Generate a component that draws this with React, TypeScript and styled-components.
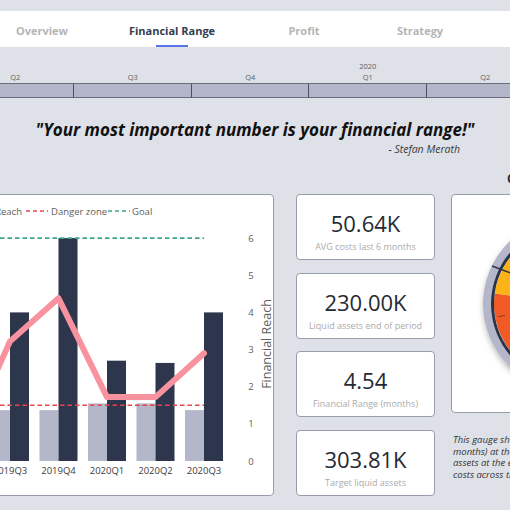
import React from "react";
import styled, { createGlobalStyle } from "styled-components";

const GlobalStyle = createGlobalStyle`
  html, body {
    margin: 0;
    padding: 0;
    background: #dfe1e8;
    overflow: hidden;
  }
  body {
    font-family: "Open Sans", "Liberation Sans", sans-serif;
  }
`;

const tabs = [
  { label: "Overview", w: 84 },
  { label: "Financial Range", w: 176, active: true },
  { label: "Profit", w: 88 },
  { label: "Strategy", w: 144 },
];

const quarters = [
  { q: "Q2" },
  { q: "Q3" },
  { q: "Q4" },
  { q: "Q1", year: "2020" },
  { q: "Q2" },
];

const kpis = [
  { value: "50.64K", label: "AVG costs last 6 months" },
  { value: "230.00K", label: "Liquid assets end of period" },
  { value: "4.54", label: "Financial Range (months)" },
  { value: "303.81K", label: "Target liquid assets" },
];

// chart data, page coordinates (x of group centre)
const groups = [
  { label: "2019Q1", costs: 1.2, assets: 3.6, reach: 2.5 },
  { label: "2019Q2", costs: 1.3, assets: 3.1, reach: 0.3 },
  { label: "2019Q3", costs: 1.37, assets: 4, reach: 3.22 },
  { label: "2019Q4", costs: 1.37, assets: 6, reach: 4.38 },
  { label: "2020Q1", costs: 1.55, assets: 2.7, reach: 1.72 },
  { label: "2020Q2", costs: 1.55, assets: 2.64, reach: 1.72 },
  { label: "2020Q3", costs: 1.37, assets: 4, reach: 2.9 },
];

const gx = (i: number) => 10 + 48.5 * (i - 2);
const gy = (v: number) => 461 - v * 37.15;

const Page = styled.div`
  width: 510px;
  height: 510px;
  overflow: hidden;
  padding-top: 11px;
  box-sizing: border-box;
`;

const Nav = styled.div`
  height: 36px;
  background: #ffffff;
  display: flex;
`;

const Tab = styled.div<{ $w: number; $active?: boolean }>`
  position: relative;
  width: ${(p) => p.$w}px;
  flex-shrink: 0;
  display: flex;
  align-items: center;
  justify-content: center;
  padding-top: 3px;
  font-size: 11px;
  font-weight: 700;
  color: ${(p) => (p.$active ? "#333d4f" : "#b5b5b5")};
  &::after {
    content: "";
    display: ${(p) => (p.$active ? "block" : "none")};
    position: absolute;
    bottom: 0;
    left: 50%;
    width: 32px;
    margin-left: -16px;
    height: 2px;
    background: #5a72e6;
  }
`;

const Timeline = styled.div`
  display: flex;
  margin-left: -43.5px;
  padding-top: 14px;
`;

const Segment = styled.div`
  width: 117.5px;
  flex-shrink: 0;
  display: flex;
  flex-direction: column;
`;

const TimeLabel = styled.div`
  height: 11px;
  line-height: 11px;
  font-size: 7.5px;
  color: #5d5d5d;
  text-align: center;
`;

const TimeBar = styled.div`
  height: 15px;
  box-sizing: border-box;
  background: #b2b6c8;
  border-top: 1px solid #6a6e7c;
  border-bottom: 1px solid #6a6e7c;
  border-right: 1px solid #4c5160;
`;

const QuoteBlock = styled.div`
  margin-top: 22px;
`;

const Quote = styled.div`
  font-size: 17px;
  line-height: 20px;
  font-weight: 700;
  font-style: italic;
  text-align: center;
  color: #111111;
`;

const Author = styled.div`
  margin-top: 2px;
  padding-right: 50px;
  font-size: 10.5px;
  line-height: 14px;
  font-style: italic;
  text-align: right;
  color: #3c3c3c;
`;

const Row = styled.div`
  display: flex;
  align-items: flex-start;
  margin-top: 15px;
  margin-left: -120px;
`;

const Card = styled.div`
  background: #ffffff;
  border: 1px solid #989dab;
  border-radius: 4px;
  box-sizing: border-box;
`;

const ChartCard = styled(Card)`
  width: 394px;
  height: 302px;
  margin-top: 23px;
  flex-shrink: 0;
  overflow: hidden;
  svg {
    display: block;
  }
`;

const KpiColumn = styled.div`
  width: 139px;
  margin-top: 23px;
  margin-left: 22px;
  flex-shrink: 0;
  display: flex;
  flex-direction: column;
  gap: 12.5px;
`;

const KpiCard = styled(Card)`
  height: 66px;
  padding-top: 15px;
  display: flex;
  flex-direction: column;
  align-items: center;
`;

const KpiValue = styled.div`
  font-size: 22px;
  line-height: 26px;
  color: #252a33;
`;

const KpiLabel = styled.div`
  margin-top: 4px;
  font-size: 9px;
  line-height: 13px;
  color: #ababab;
  white-space: nowrap;
`;

const GaugeColumn = styled.div`
  width: 238px;
  margin-left: 16px;
  flex-shrink: 0;
`;

const GaugeTitle = styled.div`
  height: 23px;
  padding-left: 56px;
  font-size: 12px;
  line-height: 16px;
  font-weight: 700;
  color: #252a33;
  white-space: nowrap;
`;

const GaugeCard = styled(Card)`
  height: 219px;
  display: flex;
  align-items: center;
  justify-content: center;
`;

const Note = styled.div`
  margin-top: 21px;
  padding-left: 2px;
  font-size: 9.5px;
  line-height: 11.6px;
  font-style: italic;
  color: #333333;
  white-space: nowrap;
`;

const arc = (cx: number, cy: number, r: number, a0: number, a1: number) => {
  const p = (a: number) => {
    const t = (a * Math.PI) / 180;
    return [cx + r * Math.cos(t), cy - r * Math.sin(t)];
  };
  const [x0, y0] = p(a0);
  const [x1, y1] = p(a1);
  const large = Math.abs(a1 - a0) > 180 ? 1 : 0;
  return `M${cx},${cy} L${x0},${y0} A${r},${r} 0 ${large} 0 ${x1},${y1} Z`;
};

const FinancialChart: React.FC = () => {
  const reachPoints = groups.map((g, i) => `${gx(i)},${gy(g.reach)}`).join(" ");
  return (
    <svg width={392} height={300}>
      <g transform="translate(119,-195)" fontFamily="'Open Sans', sans-serif">
        {/* legend */}
        <line x1={-110} y1={211} x2={-96} y2={211} stroke="#f9929f" strokeWidth={3} />
        <text x={-92} y={214.5} fontSize={9.5} fill="#605e5c">
          Liquid
        </text>
        <text x={22} y={214.5} fontSize={9.5} fill="#605e5c" textAnchor="end">
          Financial Reach
        </text>
        <line x1={26} y1={211} x2={48} y2={211} stroke="#e8434d" strokeWidth={1.6} strokeDasharray="4 3" />
        <text x={51} y={214.5} fontSize={9.5} fill="#605e5c">
          Danger zone
        </text>
        <line x1={108} y1={211} x2={130} y2={211} stroke="#3ea58c" strokeWidth={1.6} strokeDasharray="4 3" />
        <text x={132} y={214.5} fontSize={9.5} fill="#605e5c">
          Goal
        </text>

        {/* bars */}
        {groups.map((g, i) => (
          <g key={g.label}>
            <rect x={gx(i) - 19} y={gy(g.costs)} width={19} height={461 - gy(g.costs)} fill="#b3b7c9" />
            <rect x={gx(i)} y={gy(g.assets)} width={19} height={461 - gy(g.assets)} fill="#2d364d" />
            <text x={gx(i)} y={473.5} fontSize={9.5} fill="#3b3b3b" textAnchor="middle">
              {g.label}
            </text>
          </g>
        ))}

        {/* reference lines */}
        <line x1={-120} y1={gy(6)} x2={204} y2={gy(6)} stroke="#3ea58c" strokeWidth={1.6} strokeDasharray="4.5 3" />
        <line x1={-120} y1={gy(1.5)} x2={204} y2={gy(1.5)} stroke="#e8434d" strokeWidth={1.6} strokeDasharray="4.5 3" />

        <polyline points={reachPoints} fill="none" stroke="#f9929f" strokeWidth={6} strokeLinejoin="round" strokeLinecap="round" />

        {/* y axis */}
        {[0, 1, 2, 3, 4, 5, 6].map((v) => (
          <text key={v} x={251} y={gy(v) + 3.5} fontSize={9.5} fill="#605e5c" textAnchor="middle">
            {v}
          </text>
        ))}
        <text
          x={268}
          y={344}
          fontSize={12.5}
          fill="#605e5c"
          textAnchor="middle"
          dominantBaseline="middle"
          transform="rotate(-90 268 344)"
        >
          Financial Reach
        </text>
      </g>
    </svg>
  );
};

const Gauge: React.FC = () => {
  const c = 95;
  return (
    <svg width={190} height={190}>
      <defs>
        <filter id="gshadow" x="-20%" y="-20%" width="140%" height="140%">
          <feDropShadow dx={1} dy={3} stdDeviation={3} floodColor="#000" floodOpacity={0.35} />
        </filter>
      </defs>
      <g filter="url(#gshadow)">
        <circle cx={c} cy={c} r={83} fill="none" stroke="#b3b7c9" strokeWidth={8} />
      </g>
      <path d={arc(c, c, 76, 172, 280)} fill="#f15a24" />
      <path d={arc(c, c, 76, 100, 172)} fill="#fbb317" />
      <path d={arc(c, c, 76, -80, 100)} fill="#8cc152" />
      <circle cx={c} cy={c} r={77.5} fill="none" stroke="#2a3347" strokeWidth={3} />
      {[190, 225, 260].map((a) => {
        const t = (a * Math.PI) / 180;
        return (
          <line
            key={a}
            x1={c + 66 * Math.cos(t)}
            y1={c - 66 * Math.sin(t)}
            x2={c + 73 * Math.cos(t)}
            y2={c - 73 * Math.sin(t)}
            stroke="#8b3a1e"
            strokeWidth={1}
          />
        );
      })}
      <line x1={17} y1={57} x2={95} y2={86} stroke="#2a3347" strokeWidth={1.4} />
    </svg>
  );
};

const App: React.FC = () => {
  return (
    <Page>
      <GlobalStyle />
      <Nav>
        {tabs.map((t) => (
          <Tab key={t.label} $w={t.w} $active={t.active}>
            {t.label}
          </Tab>
        ))}
      </Nav>

      <Timeline>
        {quarters.map((q, i) => (
          <Segment key={i}>
            <TimeLabel>{q.year ?? ""}</TimeLabel>
            <TimeLabel>{q.q}</TimeLabel>
            <TimeBar />
          </Segment>
        ))}
      </Timeline>

      <QuoteBlock>
        <Quote>"Your most important number is your financial range!"</Quote>
        <Author>- Stefan Merath</Author>
      </QuoteBlock>

      <Row>
        <ChartCard>
          <FinancialChart />
        </ChartCard>

        <KpiColumn>
          {kpis.map((k) => (
            <KpiCard key={k.label}>
              <KpiValue>{k.value}</KpiValue>
              <KpiLabel>{k.label}</KpiLabel>
            </KpiCard>
          ))}
        </KpiColumn>

        <GaugeColumn>
          <GaugeTitle>Current Financial Range</GaugeTitle>
          <GaugeCard>
            <Gauge />
          </GaugeCard>
          <Note>
            This gauge shows the financial range (in
            <br />
            months) at the end of the period, i.e. the liquid
            <br />
            assets at the end of period divided by the average
            <br />
            costs across the last 6 months.
          </Note>
        </GaugeColumn>
      </Row>
    </Page>
  );
};

export default App;
